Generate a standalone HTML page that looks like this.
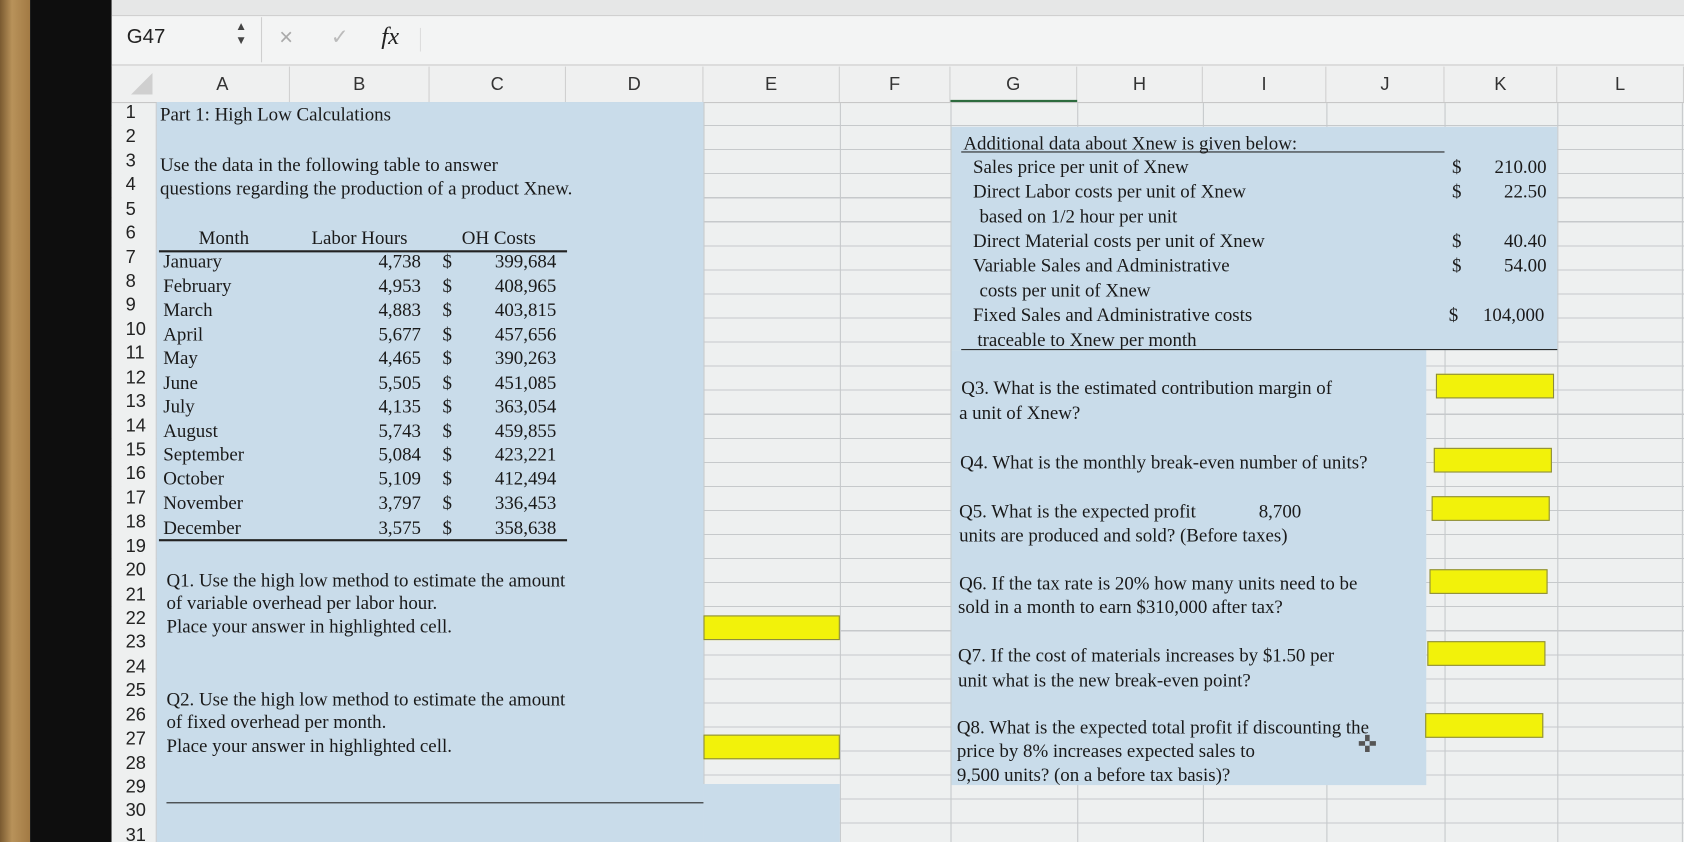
<!DOCTYPE html>
<html><head><meta charset="utf-8">
<style>
html,body{margin:0;padding:0;width:1684px;height:842px;overflow:hidden;background:#111}
#s{position:absolute;left:0;top:0;width:1568px;height:784px;transform:scale(1.07398);transform-origin:0 0;overflow:hidden;background:#eef0f0;font-family:"Liberation Serif",serif;color:#1a1a1a}
.a{position:absolute;white-space:nowrap}
.t{font-size:17.6px;line-height:26px}
.r{text-align:right}
.hl{position:absolute;height:1px;background:#c6c9cb}
.vl{position:absolute;width:1px;background:#c6c9cb}
.blue{position:absolute;background:#c9dcea}
.yel{position:absolute;background:#f2f20a;border:1px solid #8a8a40;box-sizing:border-box}
.rn{position:absolute;left:117px;font-family:"Liberation Sans",sans-serif;font-size:17px;color:#222;line-height:24px}
.ch{position:absolute;top:62px;height:33px;line-height:33px;text-align:center;font-family:"Liberation Sans",sans-serif;font-size:17px;color:#333;border-right:1px solid #d0d0d0;box-sizing:border-box}
.ul{position:absolute;height:1.5px;background:#222}
</style></head><body>
<div id="s">
<div class="a" style="left:0;top:0;width:28px;height:784px;background:linear-gradient(90deg,#7a5a30,#b8925a 40%,#a27a44)"></div>
<div class="a" style="left:28px;top:0;width:76px;height:784px;background:#0e0e0e"></div>
<div class="a" style="left:104px;top:95px;width:1464px;height:689px;background:repeating-linear-gradient(180deg,#eef0f0 0,#eef0f0 21.4px,#c6c9cb 21.4px,#c6c9cb 22.4px)"></div>
<div class="vl" style="left:655px;top:95px;height:689px"></div>
<div class="vl" style="left:782px;top:95px;height:689px"></div>
<div class="vl" style="left:885px;top:95px;height:689px"></div>
<div class="vl" style="left:1003px;top:95px;height:689px"></div>
<div class="vl" style="left:1120px;top:95px;height:689px"></div>
<div class="vl" style="left:1235px;top:95px;height:689px"></div>
<div class="vl" style="left:1345px;top:95px;height:689px"></div>
<div class="vl" style="left:1450px;top:95px;height:689px"></div>
<div class="vl" style="left:1566px;top:95px;height:689px"></div>
<div class="a" style="left:104px;top:95px;width:41px;height:689px;background:#eef0f0;border-right:1px solid #c6c9cb"></div>
<div class="a" style="left:104px;top:0;width:1464px;height:14px;background:#e6e7e7"></div>
<div class="a" style="left:104px;top:14px;width:1464px;height:45px;background:#f3f4f4;border-top:1px solid #cfcfcf;border-bottom:2px solid #c9c9c9"></div>
<div class="a" style="left:118px;top:24px;font-family:'Liberation Sans',sans-serif;font-size:19px;color:#222">G47</div>
<div class="a" style="left:219px;top:19px;font-size:11px;line-height:13px;color:#444;font-family:'Liberation Sans',sans-serif">▲<br>▼</div>
<div class="a" style="left:243px;top:16px;width:1px;height:42px;background:#cfcfcf"></div>
<div class="a" style="left:260px;top:22px;font-family:'Liberation Sans',sans-serif;font-size:22px;color:#aaa">×</div>
<div class="a" style="left:308px;top:22px;font-family:'Liberation Sans',sans-serif;font-size:20px;color:#bbb">✓</div>
<div class="a" style="left:355px;top:21px;font-family:'Liberation Serif',serif;font-style:italic;font-size:23px;color:#222">fx</div>
<div class="a" style="left:391px;top:26px;width:1px;height:22px;background:#ddd"></div>
<div class="a" style="left:104px;top:61px;width:1464px;height:34px;background:#eff0f0;border-bottom:1px solid #c6c6c6"></div>
<div class="a" style="left:122px;top:68px;width:0;height:0;border-left:20px solid transparent;border-bottom:20px solid #cfcfcf"></div>
<div class="ch" style="left:145px;width:125px">A</div>
<div class="ch" style="left:270px;width:130px">B</div>
<div class="ch" style="left:400px;width:127px">C</div>
<div class="ch" style="left:527px;width:128px">D</div>
<div class="ch" style="left:655px;width:127px">E</div>
<div class="ch" style="left:782px;width:103px">F</div>
<div class="ch" style="left:885px;width:118px">G</div>
<div class="ch" style="left:1003px;width:117px">H</div>
<div class="ch" style="left:1120px;width:115px">I</div>
<div class="ch" style="left:1235px;width:110px">J</div>
<div class="ch" style="left:1345px;width:105px">K</div>
<div class="ch" style="left:1450px;width:118px">L</div>
<div class="a" style="left:885px;top:93px;width:118px;height:2px;background:#2d6b3e"></div>
<div class="blue" style="left:146px;top:95px;width:509px;height:689px"></div>
<div class="blue" style="left:655px;top:730px;width:127px;height:54px"></div>
<div class="blue" style="left:886px;top:118px;width:564px;height:208px"></div>
<div class="blue" style="left:886px;top:326px;width:442px;height:405px"></div>
<div class="rn" style="top:93px">1</div><div class="rn" style="top:115px">2</div><div class="rn" style="top:138px">3</div><div class="rn" style="top:160px">4</div><div class="rn" style="top:183px">5</div><div class="rn" style="top:205px">6</div><div class="rn" style="top:228px">7</div><div class="rn" style="top:250px">8</div><div class="rn" style="top:272px">9</div><div class="rn" style="top:295px">10</div><div class="rn" style="top:317px">11</div><div class="rn" style="top:340px">12</div><div class="rn" style="top:362px">13</div><div class="rn" style="top:385px">14</div><div class="rn" style="top:407px">15</div><div class="rn" style="top:429px">16</div><div class="rn" style="top:452px">17</div><div class="rn" style="top:474px">18</div><div class="rn" style="top:497px">19</div><div class="rn" style="top:519px">20</div><div class="rn" style="top:542px">21</div><div class="rn" style="top:564px">22</div><div class="rn" style="top:586px">23</div><div class="rn" style="top:609px">24</div><div class="rn" style="top:631px">25</div><div class="rn" style="top:654px">26</div><div class="rn" style="top:676px">27</div><div class="rn" style="top:699px">28</div><div class="rn" style="top:721px">29</div><div class="rn" style="top:743px">30</div><div class="rn" style="top:766px">31</div>
<div class="a t" style="left:149px;top:93px">Part 1: High Low Calculations</div>
<div class="a t" style="left:149px;top:140px">Use the data in the following table to answer</div>
<div class="a t" style="left:149px;top:162px">questions regarding the production of a product Xnew.</div>
<div class="a t" style="left:185px;top:208px">Month</div>
<div class="a t" style="left:290px;top:208px">Labor Hours</div>
<div class="a t" style="left:430px;top:208px">OH Costs</div>
<div class="ul" style="left:148px;top:233px;width:380px"></div>
<div class="ul" style="left:148px;top:502px;width:380px"></div>
<div class="a t" style="left:155px;top:527px">Q1. Use the high low method to estimate the amount</div>
<div class="a t" style="left:155px;top:548px">of variable overhead per labor hour.</div>
<div class="a t" style="left:155px;top:570px">Place your answer in highlighted cell.</div>
<div class="a t" style="left:155px;top:638px">Q2. Use the high low method to estimate the amount</div>
<div class="a t" style="left:155px;top:659px">of fixed overhead per month.</div>
<div class="a t" style="left:155px;top:681px">Place your answer in highlighted cell.</div>
<div class="ul" style="left:155px;top:747px;width:500px;height:1px"></div>
<div class="yel" style="left:655px;top:573px;width:127px;height:23px"></div>
<div class="yel" style="left:655px;top:684px;width:127px;height:23px"></div>
<div class="a t" style="left:897px;top:120px">Additional data about Xnew is given below:</div>
<div class="ul" style="left:895px;top:141px;width:450px;height:1px"></div>
<div class="a t" style="left:906px;top:142px">Sales price per unit of Xnew</div>
<div class="a t" style="left:906px;top:165px">Direct Labor costs per unit of Xnew</div>
<div class="a t" style="left:912px;top:188px">based on 1/2 hour per unit</div>
<div class="a t" style="left:906px;top:211px">Direct Material costs per unit of Xnew</div>
<div class="a t" style="left:906px;top:234px">Variable Sales and Administrative</div>
<div class="a t" style="left:912px;top:257px">costs per unit of Xnew</div>
<div class="a t" style="left:906px;top:280px">Fixed Sales and Administrative costs</div>
<div class="a t" style="left:910px;top:303px">traceable to Xnew per month</div>
<div class="a t" style="left:1352px;top:142px">$</div><div class="a t r" style="left:1360px;top:142px;width:80px">210.00</div>
<div class="a t" style="left:1352px;top:165px">$</div><div class="a t r" style="left:1360px;top:165px;width:80px">22.50</div>
<div class="a t" style="left:1352px;top:211px">$</div><div class="a t r" style="left:1360px;top:211px;width:80px">40.40</div>
<div class="a t" style="left:1352px;top:234px">$</div><div class="a t r" style="left:1360px;top:234px;width:80px">54.00</div>
<div class="a t" style="left:1349px;top:280px">$</div><div class="a t r" style="left:1358px;top:280px;width:80px">104,000</div>
<div class="ul" style="left:895px;top:325px;width:555px;height:1px"></div>
<div class="a t" style="left:895px;top:348px">Q3. What is the estimated contribution margin of</div>
<div class="a t" style="left:893px;top:371px">a unit of Xnew?</div>
<div class="a t" style="left:894px;top:417px">Q4. What is the monthly break-even number of units?</div>
<div class="a t" style="left:893px;top:463px">Q5. What is the expected profit</div>
<div class="a t" style="left:1172px;top:463px">8,700</div>
<div class="a t" style="left:893px;top:485px">units are produced and sold? (Before taxes)</div>
<div class="a t" style="left:893px;top:530px">Q6. If the tax rate is 20% how many units need to be</div>
<div class="a t" style="left:892px;top:552px">sold in a month to earn $310,000 after tax?</div>
<div class="a t" style="left:892px;top:597px">Q7. If the cost of materials increases by $1.50 per</div>
<div class="a t" style="left:892px;top:620px">unit what is the new break-even point?</div>
<div class="a t" style="left:891px;top:664px">Q8. What is the expected total profit if discounting the</div>
<div class="a t" style="left:891px;top:686px">price by 8% increases expected sales to</div>
<div class="a t" style="left:891px;top:708px">9,500 units? (on a before tax basis)?</div>
<div class="a" style="left:1264px;top:680px;font-family:'Liberation Sans',sans-serif;font-size:22px;color:#555">✜</div>
<div class="yel" style="left:1337px;top:348px;width:110px;height:23px"></div>
<div class="yel" style="left:1335px;top:417px;width:110px;height:23px"></div>
<div class="yel" style="left:1333px;top:462px;width:110px;height:23px"></div>
<div class="yel" style="left:1331px;top:530px;width:110px;height:23px"></div>
<div class="yel" style="left:1329px;top:597px;width:110px;height:23px"></div>
<div class="yel" style="left:1327px;top:664px;width:110px;height:23px"></div>

<div class="a t" style="left:152px;top:230px">January</div><div class="a t r" style="left:312px;top:230px;width:80px">4,738</div><div class="a t" style="left:412px;top:230px">$</div><div class="a t r" style="left:438px;top:230px;width:80px">399,684</div>
<div class="a t" style="left:152px;top:253px">February</div><div class="a t r" style="left:312px;top:253px;width:80px">4,953</div><div class="a t" style="left:412px;top:253px">$</div><div class="a t r" style="left:438px;top:253px;width:80px">408,965</div>
<div class="a t" style="left:152px;top:275px">March</div><div class="a t r" style="left:312px;top:275px;width:80px">4,883</div><div class="a t" style="left:412px;top:275px">$</div><div class="a t r" style="left:438px;top:275px;width:80px">403,815</div>
<div class="a t" style="left:152px;top:298px">April</div><div class="a t r" style="left:312px;top:298px;width:80px">5,677</div><div class="a t" style="left:412px;top:298px">$</div><div class="a t r" style="left:438px;top:298px;width:80px">457,656</div>
<div class="a t" style="left:152px;top:320px">May</div><div class="a t r" style="left:312px;top:320px;width:80px">4,465</div><div class="a t" style="left:412px;top:320px">$</div><div class="a t r" style="left:438px;top:320px;width:80px">390,263</div>
<div class="a t" style="left:152px;top:343px">June</div><div class="a t r" style="left:312px;top:343px;width:80px">5,505</div><div class="a t" style="left:412px;top:343px">$</div><div class="a t r" style="left:438px;top:343px;width:80px">451,085</div>
<div class="a t" style="left:152px;top:365px">July</div><div class="a t r" style="left:312px;top:365px;width:80px">4,135</div><div class="a t" style="left:412px;top:365px">$</div><div class="a t r" style="left:438px;top:365px;width:80px">363,054</div>
<div class="a t" style="left:152px;top:388px">August</div><div class="a t r" style="left:312px;top:388px;width:80px">5,743</div><div class="a t" style="left:412px;top:388px">$</div><div class="a t r" style="left:438px;top:388px;width:80px">459,855</div>
<div class="a t" style="left:152px;top:410px">September</div><div class="a t r" style="left:312px;top:410px;width:80px">5,084</div><div class="a t" style="left:412px;top:410px">$</div><div class="a t r" style="left:438px;top:410px;width:80px">423,221</div>
<div class="a t" style="left:152px;top:432px">October</div><div class="a t r" style="left:312px;top:432px;width:80px">5,109</div><div class="a t" style="left:412px;top:432px">$</div><div class="a t r" style="left:438px;top:432px;width:80px">412,494</div>
<div class="a t" style="left:152px;top:455px">November</div><div class="a t r" style="left:312px;top:455px;width:80px">3,797</div><div class="a t" style="left:412px;top:455px">$</div><div class="a t r" style="left:438px;top:455px;width:80px">336,453</div>
<div class="a t" style="left:152px;top:478px">December</div><div class="a t r" style="left:312px;top:478px;width:80px">3,575</div><div class="a t" style="left:412px;top:478px">$</div><div class="a t r" style="left:438px;top:478px;width:80px">358,638</div>
</div>
</body></html>
